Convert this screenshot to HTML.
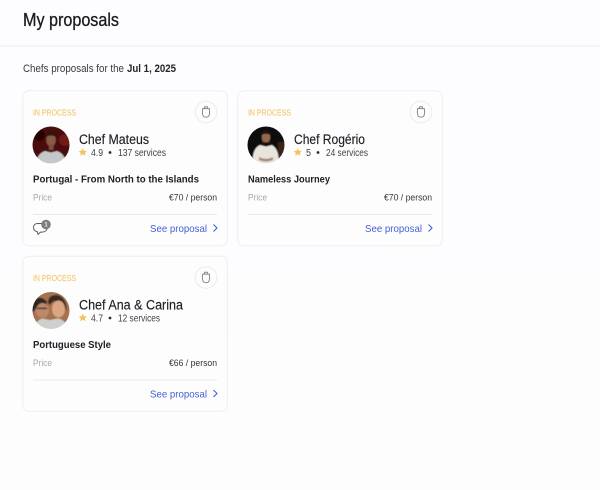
<!DOCTYPE html>
<html lang="en">
<head>
<meta charset="utf-8">
<title>My proposals</title>
<style>
html,body{margin:0;padding:0;width:600px;height:490px;overflow:hidden;background:#fdfdfe}
svg{display:block}
text{font-family:"Liberation Sans",sans-serif}
.st{font-size:8px;fill:#f3ca72;stroke:#f3ca72;stroke-width:.15}
.nm{font-size:13.500px;fill:#1f1f25;stroke:#1f1f25;stroke-width:.15}
.sm{font-size:9.700px;fill:#3f3f46}
.tt{font-size:10.500px;font-weight:bold;fill:#202026}
.pr{font-size:9.500px;fill:#a8a8ac}
.am{font-size:9.500px;fill:#34343b}
.sp{font-size:10.500px;fill:#4560d4}
</style>
</head>
<body>
<svg width="600" height="490" viewBox="0 0 600 490" xmlns="http://www.w3.org/2000/svg">
<defs>
<linearGradient id="bg" x1="0" y1="0" x2="0" y2="1"><stop offset="0" stop-color="#fdfcfe"/><stop offset="1" stop-color="#fdfdfd"/></linearGradient>
<clipPath id="av"><circle cx="51" cy="145" r="18.500"/></clipPath>
<filter id="soft" x="-10%" y="-10%" width="120%" height="120%"><feGaussianBlur stdDeviation=".6"/></filter>
<g id="trash">
<circle cx="206" cy="112" r="10.800" fill="#fdfdfe" stroke="#ececee"/>
<path d="M202.200 108.600h7.600M204.200 108.400l.5-1.700h2.600l.5 1.700M202.700 108.800c-.4 2.400-.4 5.400.4 7 .4.800 1.200 1.300 2.900 1.300s2.500-.5 2.900-1.300c.8-1.600.8-4.600.4-7" fill="none" stroke="#87878c" stroke-width="1"/>
</g>
<path id="star" d="M82.800 148.200l1.200 2.600 2.900.3-2.100 1.900.6 2.800-2.600-1.500-2.600 1.500.6-2.800-2.100-1.900 2.900-.3z" fill="#f3c25c"/>
<g id="foot">
<line x1="33" y1="214.500" x2="217" y2="214.500" stroke="#eaeaed"/>
<text class="sp" x="150" y="232" textLength="57" lengthAdjust="spacingAndGlyphs">See proposal</text>
<path d="M213.500 224.500l3.500 3.500-3.500 3.500" fill="none" stroke="#4560d4" stroke-width="1.100"/>
</g>
</defs>

<rect width="600" height="490" fill="url(#bg)"/>
<text x="23" y="26" font-size="18.500" fill="#1a1a20" textLength="96" lengthAdjust="spacingAndGlyphs" stroke="#1a1a20" stroke-width=".3">My proposals</text>
<rect x="0" y="45.500" width="600" height="1.200" fill="#f0f0f2"/>
<text x="23" y="72" font-size="10.800" fill="#3a3a41" textLength="101" lengthAdjust="spacingAndGlyphs">Chefs proposals for the</text>
<text x="127" y="72" font-size="10.800" font-weight="bold" fill="#24242a" textLength="49" lengthAdjust="spacingAndGlyphs">Jul 1, 2025</text>

<!-- Card 1 -->
<g>
<rect x="22.800" y="90.800" width="204.500" height="155" rx="6" fill="#fdfdfe" stroke="#eeeef0"/>
<text class="st" x="33" y="115.500" textLength="43" lengthAdjust="spacingAndGlyphs">IN PROCESS</text>
<use href="#trash"/>
<g clip-path="url(#av)"><g filter="url(#soft)">
<rect x="30" y="124" width="42" height="42" fill="#4a0b0c"/>
<circle cx="65" cy="140" r="6" fill="#6e1a14"/>
<circle cx="39" cy="135" r="6" fill="#2c0606"/>
<ellipse cx="51" cy="140" rx="4.800" ry="6.500" fill="#8a5a44"/>
<path d="M46 137c0-4 2.500-5.500 5-5.500s5 1.500 5 5.500c-3-2-7-2-10 0z" fill="#2a1510"/>
<rect x="49" y="145" width="4.500" height="5" fill="#80503c"/>
<path d="M36 166c0-8 3-13 9-15l6 1.500 6-1.500c6 2 9 7 9 15z" fill="#c4c8c8"/>
</g></g>
<text class="nm" x="79" y="144" textLength="70" lengthAdjust="spacingAndGlyphs">Chef Mateus</text>
<use href="#star"/>
<text class="sm" x="91" y="156" textLength="12" lengthAdjust="spacingAndGlyphs">4.9</text>
<circle cx="110" cy="152.500" r="1.400" fill="#2c2c34"/>
<text class="sm" x="118" y="156" textLength="48" lengthAdjust="spacingAndGlyphs">137 services</text>
<text class="tt" x="33" y="182.500" textLength="166" lengthAdjust="spacingAndGlyphs">Portugal - From North to the Islands</text>
<text class="pr" x="33" y="200.500" textLength="19" lengthAdjust="spacingAndGlyphs">Price</text>
<text class="am" x="169" y="200.500" textLength="48" lengthAdjust="spacingAndGlyphs">€70 / person</text>
<use href="#foot"/>
<path d="M37.500 223.500h4.500c3 0 5 1.700 5 4.200 0 2.700-2 4.400-5 4.400h-1.500l-2.500 2.200-.6-2.500c-2.100-.5-3.900-2-3.900-4.200 0-2.500 1.500-4.100 4-4.100z" fill="none" stroke="#5c5c62" stroke-width="1"/>
<circle cx="46" cy="224.500" r="4.800" fill="#7d7d82"/>
<text x="46" y="226.700" font-size="6" font-weight="bold" fill="#eeeeee" text-anchor="middle">1</text>
</g>

<!-- Card 2 -->
<g transform="translate(215 0)">
<rect x="22.800" y="90.800" width="204.500" height="155" rx="6" fill="#fdfdfe" stroke="#eeeef0"/>
<text class="st" x="33" y="115.500" textLength="43" lengthAdjust="spacingAndGlyphs">IN PROCESS</text>
<use href="#trash"/>
<g clip-path="url(#av)"><g filter="url(#soft)">
<rect x="30" y="124" width="42" height="42" fill="#0f0c0b"/>
<rect x="63" y="142" width="9" height="24" fill="#3a2418"/>
<ellipse cx="51" cy="137" rx="4.300" ry="6" fill="#95684e"/>
<path d="M46.500 135c0-3.500 2-5 4.500-5s4.500 1.500 4.500 5c-3-1.500-6-1.500-9 0z" fill="#1c120d"/>
<path d="M47 140c1 3 7 3 8 0v3h-8z" fill="#3a2419"/>
<path d="M38 166c-1-12 1-18 7-21l6 1.500 6-1.500c5 3 7.500 9 6.500 21z" fill="#e8e4de"/>
<path d="M44 157c5 2.500 9 2.500 14 0v3c-5 2-9 2-14 0z" fill="#a98873"/>
</g></g>
<text class="nm" x="79" y="144" textLength="71" lengthAdjust="spacingAndGlyphs">Chef Rogério</text>
<use href="#star"/>
<text class="sm" x="91" y="156" textLength="5" lengthAdjust="spacingAndGlyphs">5</text>
<circle cx="103" cy="152.500" r="1.400" fill="#2c2c34"/>
<text class="sm" x="111" y="156" textLength="42" lengthAdjust="spacingAndGlyphs">24 services</text>
<text class="tt" x="33" y="182.500" textLength="82" lengthAdjust="spacingAndGlyphs">Nameless Journey</text>
<text class="pr" x="33" y="200.500" textLength="19" lengthAdjust="spacingAndGlyphs">Price</text>
<text class="am" x="169" y="200.500" textLength="48" lengthAdjust="spacingAndGlyphs">€70 / person</text>
<use href="#foot"/>
</g>

<!-- Card 3 -->
<g transform="translate(0 165.500)">
<rect x="22.800" y="90.800" width="204.500" height="155" rx="6" fill="#fdfdfe" stroke="#eeeef0"/>
<text class="st" x="33" y="115.500" textLength="43" lengthAdjust="spacingAndGlyphs">IN PROCESS</text>
<use href="#trash"/>
<g clip-path="url(#av)"><g filter="url(#soft)">
<rect x="30" y="124" width="42" height="42" fill="#a5714f"/>
<path d="M31 138c3-5 8-7 12-5l4 3-1 4-10 3-5 6z" fill="#2e2522"/>
<path d="M48 136c1-5 4-6.500 8-6.500s8 3 10 9l1 7-5-8-8-2-5 4z" fill="#3a2a24"/>
<ellipse cx="42.500" cy="145" rx="6.500" ry="7.500" fill="#bd8868"/>
<ellipse cx="58.500" cy="143.500" rx="6.500" ry="8.500" fill="#dca584"/>
<rect x="37" y="142" width="10" height="1.600" fill="#4a3a38"/>
<path d="M34 166c0-7 3-11 8-13l8 1.500 8-1.500c6 1 9 5 10 13z" fill="#cfcfce"/>
</g></g>
<text class="nm" x="79" y="144" textLength="104" lengthAdjust="spacingAndGlyphs">Chef Ana &amp; Carina</text>
<use href="#star"/>
<text class="sm" x="91" y="156" textLength="12" lengthAdjust="spacingAndGlyphs">4.7</text>
<circle cx="110" cy="152.500" r="1.400" fill="#2c2c34"/>
<text class="sm" x="118" y="156" textLength="42" lengthAdjust="spacingAndGlyphs">12 services</text>
<text class="tt" x="33" y="182.500" textLength="78" lengthAdjust="spacingAndGlyphs">Portuguese Style</text>
<text class="pr" x="33" y="200.500" textLength="19" lengthAdjust="spacingAndGlyphs">Price</text>
<text class="am" x="169" y="200.500" textLength="48" lengthAdjust="spacingAndGlyphs">€66 / person</text>
<use href="#foot"/>
</g>
</svg>
</body>
</html>
